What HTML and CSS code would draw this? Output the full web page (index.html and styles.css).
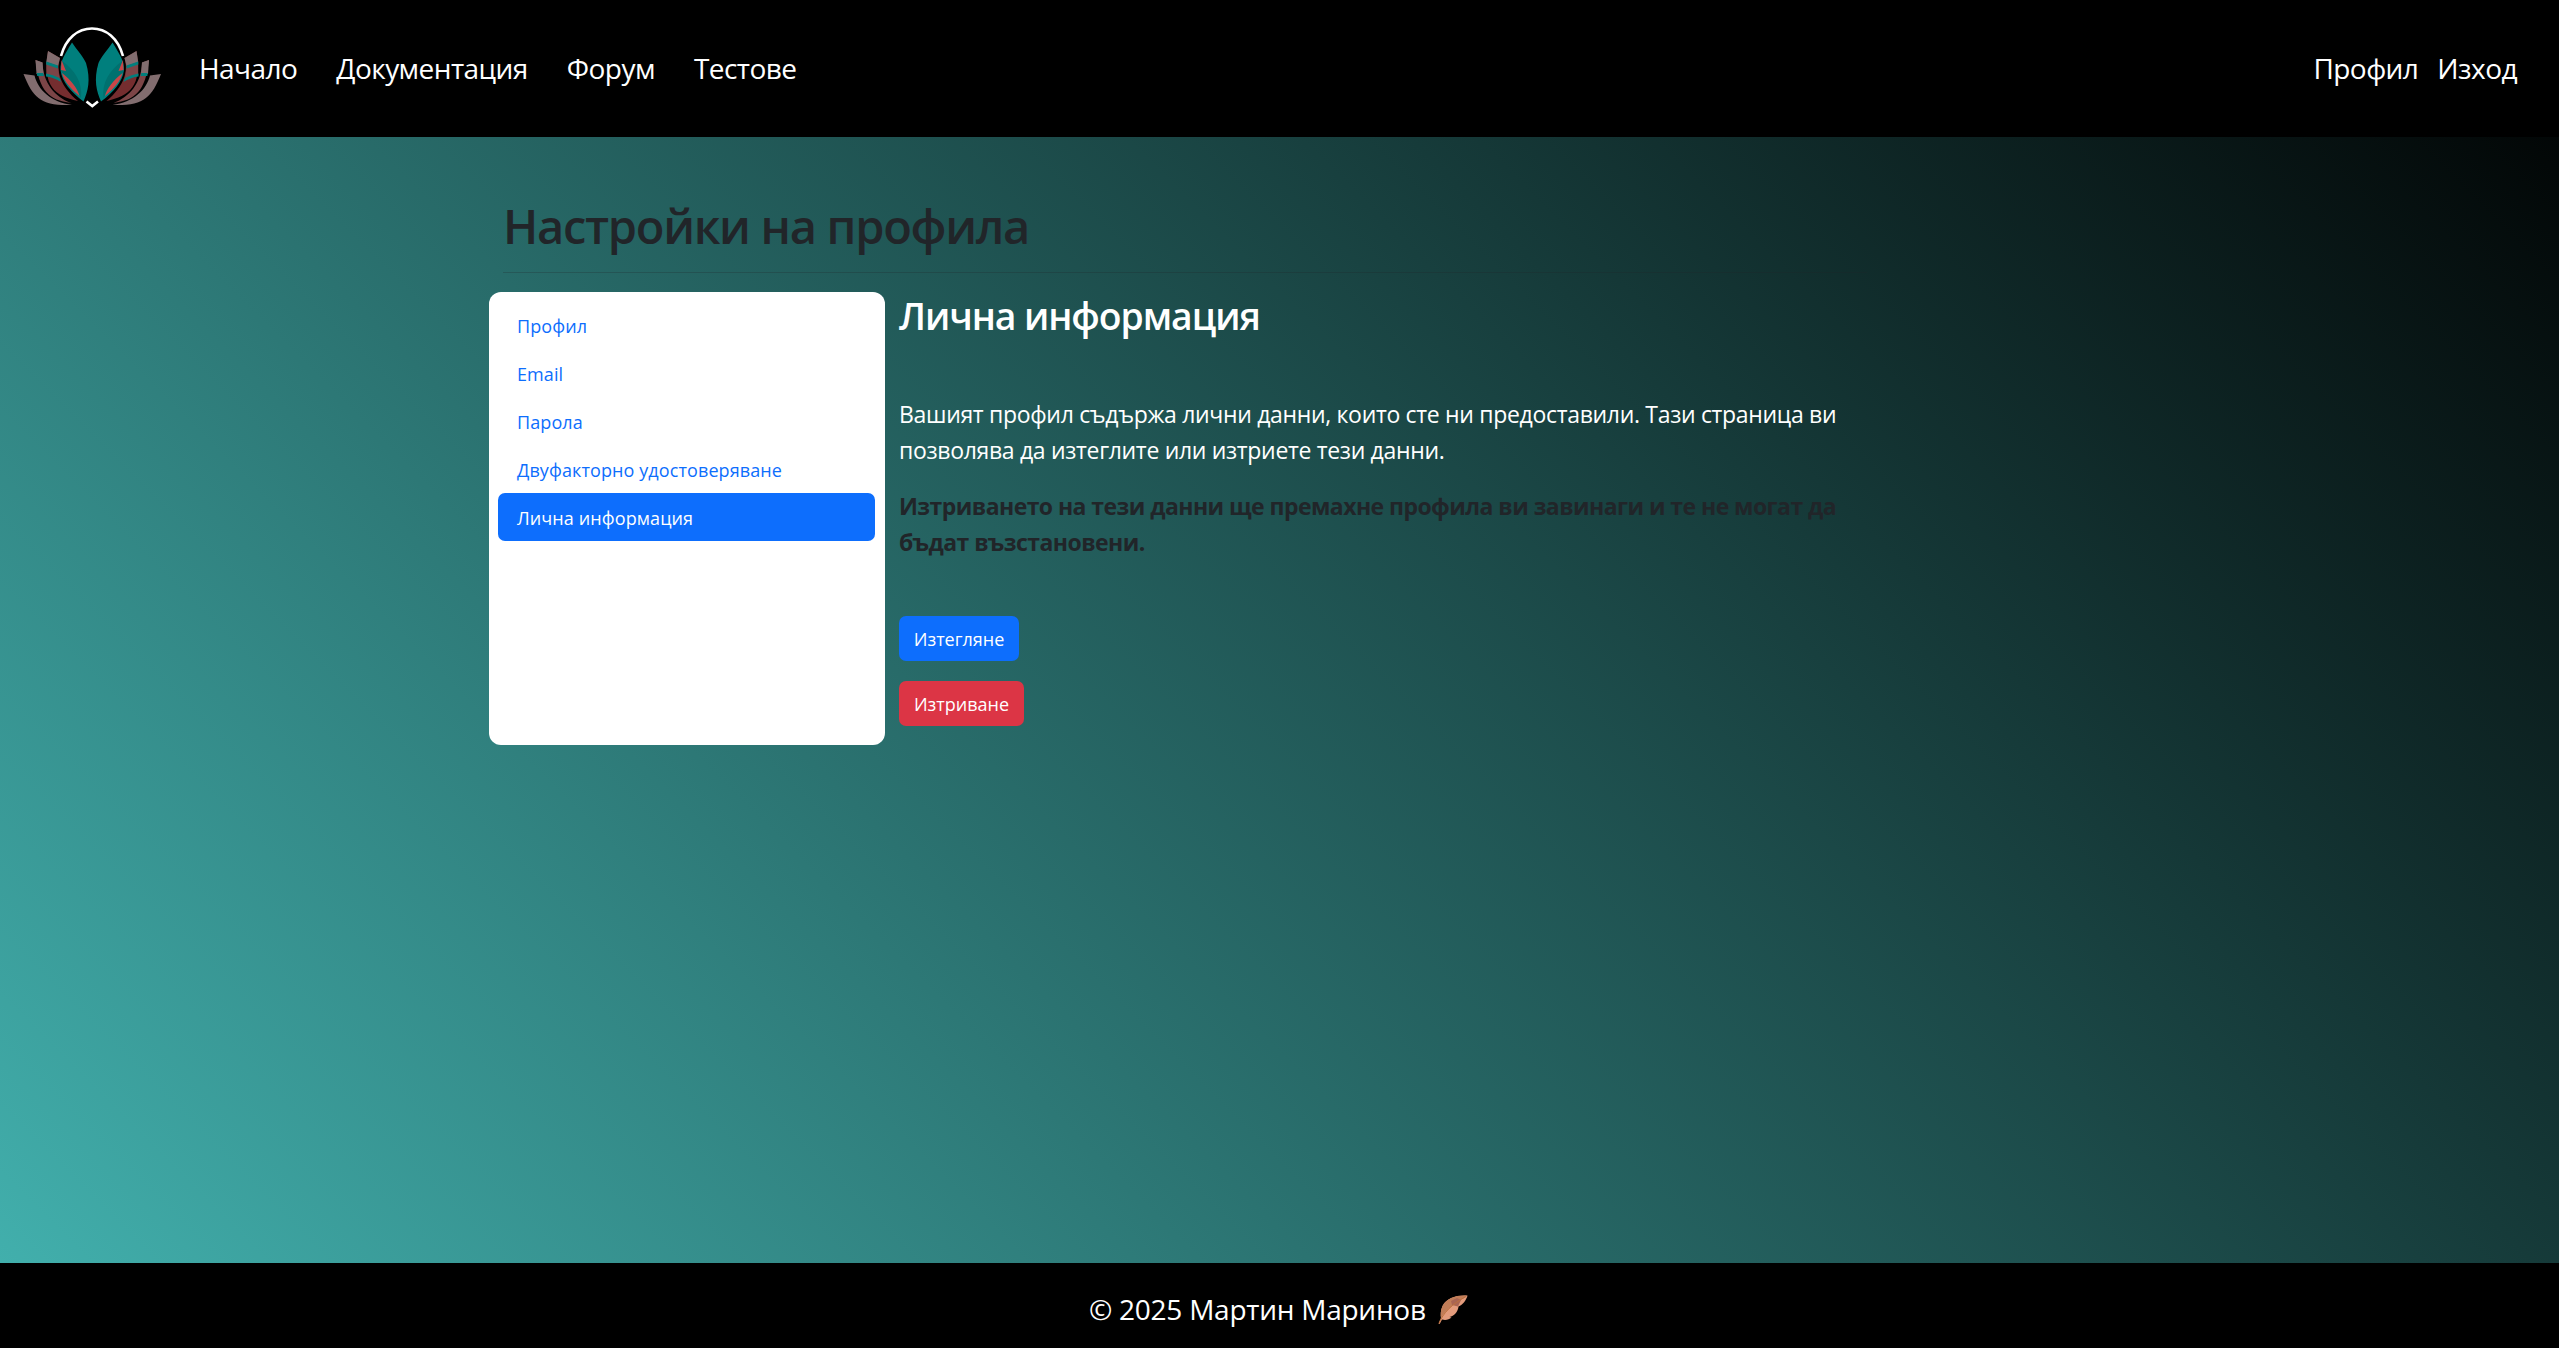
FILE: index.html
```html
<!DOCTYPE html>
<html lang="bg">
<head>
<meta charset="utf-8">
<title>Лична информация</title>
<link rel="stylesheet" href="styles.css">
</head>
<body>
<header class="navbar">
  <a class="brand" href="#" aria-label="Начало">
    <svg class="logo" viewBox="0 0 200 137">
      <path d="M61 56C66 38 78 28.500 92 28.500S118 38 123 56" fill="none" stroke="#fff" stroke-width="2.600"/>
      <path d="M86.500 101.500L92.300 106L98 101.500" fill="none" stroke="#fff" stroke-width="2.600"/>
      <g id="wing">
        <path d="M23.500 74L34.500 75.500C38 90 51 102 72 105C41 106 33 98 23.500 74Z" fill="#826d6f"/>
        <path d="M35.500 60L42.500 62.500C43 83 55 97 71 103C49 100 39 91 35.500 60Z" fill="#7c4547"/>
        <path d="M35.500 60L42.500 62.500L43.500 74H36.500Z" fill="#826d6f"/>
        <path d="M36.700 73H43.200L44 76H37.200Z" fill="#007f7d"/>
        <path d="M48 51L60 58C56 71 60 86 78 101C55 96 42 86 48 51Z" fill="#752d2f"/>
        <path d="M46.300 62L58 67L59.500 79L46.300 75Z" fill="#7c4547"/>
        <path d="M48 51L60 58L58 66L46.300 62Z" fill="#826d6f"/>
        <path d="M46.300 61.500L58 65.500V68.500L46.200 64.500ZM46 73.500Q53 74.500 59.500 78L61 82Q53 77 46 76.500Z" fill="#007f7d"/>
        <path d="M72 42.500C77 50 83 56 86 63C91 80 88 91 83.500 101.500C71 92 62 82 60.500 70C60 61 65 54 72 42.500Z" fill="#007f7d"/>
        <path d="M62 61C75 70 83 83 81 98C73 83 63 78 61 70Z" fill="#00716f"/>
        <path d="M61.500 60L66 71L61 70ZM62 73C71 80 78 89 79.500 96C70 88 64 81 62 73Z" fill="#c94648"/>
      </g>
      <use href="#wing" transform="matrix(-1 0 0 1 184.500 0)"/>
    </svg>
  </a>
  <nav class="links"><a href="#">Начало</a><a href="#">Документация</a><a href="#">Форум</a><a href="#">Тестове</a></nav>
  <nav class="account"><a href="#">Профил</a><a href="#">Изход</a></nav>
</header>
<main class="page">
  <div class="heading"><h1>Настройки на профила</h1><hr></div>
  <div class="columns">
    <aside class="sidebar">
      <a href="#">Профил</a>
      <a href="#">Email</a>
      <a href="#">Парола</a>
      <a href="#">Двуфакторно удостоверяване</a>
      <a class="active" href="#">Лична информация</a>
    </aside>
    <section class="content">
      <h2>Лична информация</h2>
      <p class="intro">Вашият профил съдържа лични данни, които сте ни предоставили. Тази страница ви<br>позволява да изтеглите или изтриете тези данни.</p>
      <p class="warning">Изтриването на тези данни ще премахне профила ви завинаги и те не могат да<br>бъдат възстановени.</p>
      <button class="btn download">Изтегляне</button>
      <button class="btn delete">Изтриване</button>
    </section>
  </div>
</main>
<footer class="footer">
  <span>© 2025 Мартин Маринов</span>
  <svg class="feather" viewBox="0 0 30 30">
    <path d="M29.500 .7C18 0 9 3 4.500 11C2.500 15 2.500 20 3 23L.7 28.500L1.700 29L4 24.500C8 25.500 11 24.500 13.500 22.500L11.500 22C16 21 20 17 20.500 11.500C25 10 28 5 29.500 .7Z" fill="#e39b7c"/>
    <path d="M29.500 .7C18 0 9 3 4.500 11C2.500 15 2.500 20 3 23C8 14 18 8 29.500 .7Z" fill="#c17d58"/>
    <path d="M13 6L19 3L23 5L20 11.500L14 10Z" fill="#a96553"/>
    <path d="M.9 28.500C5 18 14 9 28 1.500" fill="none" stroke="#bd713e" stroke-width="1"/>
  </svg>
</footer>
</body>
</html>
```
FILE: styles.css
```css
* { box-sizing: border-box; }
body {
  margin: 0;
  height: 1348px;
  display: flex;
  flex-direction: column;
  font-family: "Open Sans", "Noto Sans", sans-serif;
  color: #212529;
  background: linear-gradient(45deg, #43b3b0, #000);
}
a { text-decoration: none; color: inherit; }
.navbar {
  height: 137px;
  flex: none;
  display: flex;
  background: #000;
  color: #fff;
  font-size: 28px;
  line-height: 42px;
  letter-spacing: -.55px;
  padding-top: 47px;
}
.brand { margin-top: -47px; width: 199px; height: 137px; }
.logo { display: block; width: 200px; height: 137px; }
.links { display: flex; gap: 39px; }
.account { display: flex; gap: 19px; margin-left: auto; padding-right: 42px; }
.page {
  flex: 1;
  padding: 59px 0 0 489px;
}
.heading { width: 1378px; padding-left: 14px; height: 96px; }
h1, h2 { margin: 0; font-weight: 600; }
h1 { font-size: 47px; line-height: 60px; letter-spacing: -1.3px; }
hr { margin: 16px 0 0; border: 0; border-top: 1px solid #212529; opacity: .25; }
.columns { display: flex; gap: 14px; }
.sidebar {
  width: 396px;
  height: 453px;
  background: #fff;
  border-radius: 12px;
  padding: 9px 10px 9px 9px;
  display: flex;
  flex-direction: column;
  color: #0d6efd;
  font-size: 18px;
  line-height: 24px;
  letter-spacing: .1px;
}
.sidebar a { height: 48px; padding: 13px 19px 11px; border-radius: 7px; }
.sidebar .active { background: #0d6efd; color: #fff; }
.content { display: flex; flex-direction: column; align-items: flex-start; color: #fff; }
h2 { font-size: 37.3px; line-height: 48px; letter-spacing: -1.05px; }
p { margin: 0; font-size: 23px; line-height: 36px; white-space: nowrap; }
.intro { margin-top: 56px; letter-spacing: -.32px; }
.warning { margin-top: 20px; font-weight: 700; color: #212529; letter-spacing: -.56px; }
.btn {
  font: 18px/24px "Open Sans", "Noto Sans", sans-serif;
  height: 45px;
  padding: 0;
  color: #fff;
  border: 0;
  border-radius: 7px;
}
.download { width: 120px; margin-top: 56px; background: #0d6efd; }
.delete { width: 125px; margin-top: 20px; background: #dc3545; }
.footer {
  height: 85px;
  flex: none;
  display: flex;
  padding: 25px 0 0 1089px;
  background: #000;
  color: #fff;
  font-size: 28px;
  line-height: 42px;
  letter-spacing: -.25px;
}
.feather { width: 30px; height: 30px; margin: 7px 0 0 12px; }
```
